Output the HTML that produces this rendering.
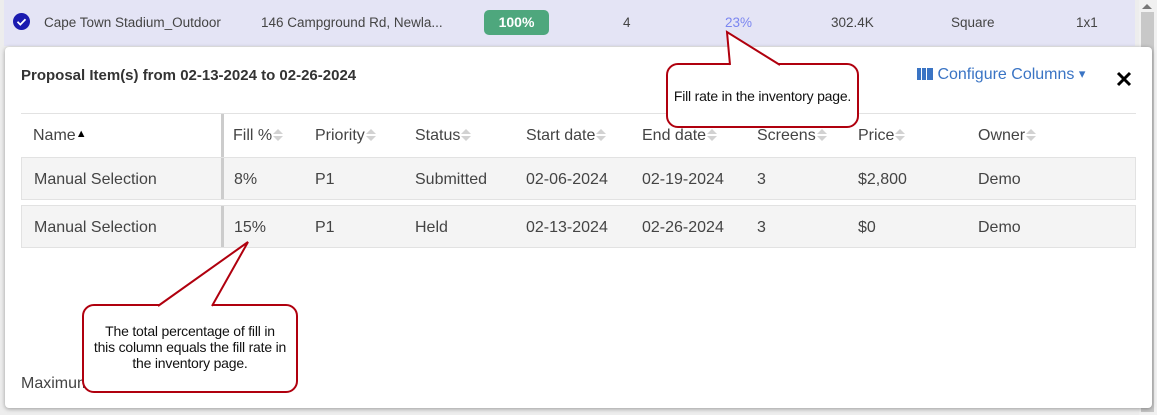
<!DOCTYPE html>
<html><head><meta charset="utf-8"><style>
*{margin:0;padding:0;box-sizing:border-box}
body{width:1157px;height:415px;overflow:hidden;background:#ededed;font-family:"Liberation Sans",Arial,sans-serif;position:relative;color:#333}
.a{position:absolute;white-space:nowrap}
.top{position:absolute;left:4px;top:0;width:1131px;height:46px;background:#e4e4f5}
.sb{position:absolute;left:1139px;top:0;width:18px;height:415px;background:#f1f1f1}
.pop{position:absolute;left:5px;top:47px;width:1147px;height:361px;background:#fff;border-radius:4px;box-shadow:0 1px 4px rgba(0,0,0,.35)}
.t14{font-size:13.5px}
.t16{font-size:16px;color:#444}
.row{position:absolute;left:21px;width:1115px;height:43px;background:#f4f4f4;border:1px solid #e2e2e2}
.sep{position:absolute;left:221px;width:3px;background:#ccc}
.ar{display:inline-block;width:9px;height:13px;vertical-align:-2px;margin-left:1px;position:relative}
.ar:before,.ar:after{content:"";position:absolute;left:0;border-left:5px solid transparent;border-right:5px solid transparent}
.ar:before{top:0;border-bottom:5px solid #d2d2d2}
.ar:after{top:7px;border-top:5px solid #d2d2d2}
.call{position:absolute;background:#fff;border:2px solid #b0000e;border-radius:12px;font-size:14px;color:#111;text-align:center;line-height:16px;letter-spacing:-0.2px}
</style></head><body>
<div class="top"></div>
<div class="sb"><div style="position:absolute;left:3px;top:4px;border-left:5px solid transparent;border-right:5px solid transparent;border-bottom:5px solid #777"></div><div style="position:absolute;left:2px;top:12px;width:13px;height:400px;background:#c8c8c8"></div></div>
<svg class="a" style="left:13px;top:13px" width="17" height="17"><circle cx="8.5" cy="8.5" r="8.5" fill="#1b1bb0"/><path d="M4.5 8.8l2.8 2.8 5.2-5.4" stroke="#fff" stroke-width="1.8" fill="none"/></svg>
<div class="a t14" style="left:44px;top:15px;color:#444">Cape Town Stadium_Outdoor</div>
<div class="a t14" style="left:261px;top:15px;color:#444">146 Campground Rd, Newla...</div>
<div class="a" style="left:484px;top:10px;width:65px;height:25px;background:#4ea77d;border-radius:5px;color:#fff;font-weight:bold;font-size:14px;text-align:center;line-height:25px">100%</div>
<div class="a t14" style="left:623px;top:15px;color:#444">4</div>
<div class="a t14" style="left:725px;top:15px;color:#7b86f0">23%</div>
<div class="a t14" style="left:831px;top:15px;color:#444">302.4K</div>
<div class="a t14" style="left:951px;top:15px;color:#444">Square</div>
<div class="a t14" style="left:1076px;top:15px;color:#444">1x1</div>

<div class="pop"></div>
<div class="a" style="left:21px;top:67px;font-size:15px;font-weight:bold;color:#333">Proposal Item(s) from 02-13-2024 to 02-26-2024</div>
<div class="a" style="left:917px;top:66px;font-size:16px;color:#3a74c4"><span style="display:inline-block;width:16px;height:12px;vertical-align:-1px;background:linear-gradient(90deg,#3a74c4 4px,#fff 4px,#fff 5px,#3a74c4 5px,#3a74c4 9px,#fff 9px,#fff 10px,#3a74c4 10px)"></span> Configure Columns <span style="font-size:13px;vertical-align:1px">▾</span></div>
<svg class="a" style="left:1116px;top:71px" width="16" height="16"><path d="M2 2L14 14M14 2L2 14" stroke="#000" stroke-width="3"/></svg>
<div class="a" style="left:21px;top:113px;width:1115px;height:1px;background:#e2e2e2"></div>
<div class="sep" style="top:114px;height:43px"></div>
<div class="a t16" style="left:33px;top:127px">Name<span style="font-size:11px;color:#000;vertical-align:3px">▲</span></div>
<div class="a t16" style="left:233px;top:127px">Fill %<span class="ar"></span></div>
<div class="a t16" style="left:315px;top:127px">Priority<span class="ar"></span></div>
<div class="a t16" style="left:415px;top:127px">Status<span class="ar"></span></div>
<div class="a t16" style="left:526px;top:127px">Start date<span class="ar"></span></div>
<div class="a t16" style="left:642px;top:127px">End date<span class="ar"></span></div>
<div class="a t16" style="left:757px;top:127px">Screens<span class="ar"></span></div>
<div class="a t16" style="left:858px;top:127px">Price<span class="ar"></span></div>
<div class="a t16" style="left:978px;top:127px">Owner<span class="ar"></span></div>

<div class="row" style="top:157px"></div>
<div class="sep" style="top:158px;height:41px"></div>
<div class="row" style="top:205px"></div>
<div class="sep" style="top:206px;height:41px"></div>
<div class="a t16" style="left:34px;top:171px">Manual Selection</div>
<div class="a t16" style="left:234px;top:171px">8%</div>
<div class="a t16" style="left:315px;top:171px">P1</div>
<div class="a t16" style="left:415px;top:171px">Submitted</div>
<div class="a t16" style="left:526px;top:171px">02-06-2024</div>
<div class="a t16" style="left:642px;top:171px">02-19-2024</div>
<div class="a t16" style="left:757px;top:171px">3</div>
<div class="a t16" style="left:858px;top:171px">$2,800</div>
<div class="a t16" style="left:978px;top:171px">Demo</div>
<div class="a t16" style="left:34px;top:219px">Manual Selection</div>
<div class="a t16" style="left:234px;top:219px">15%</div>
<div class="a t16" style="left:315px;top:219px">P1</div>
<div class="a t16" style="left:415px;top:219px">Held</div>
<div class="a t16" style="left:526px;top:219px">02-13-2024</div>
<div class="a t16" style="left:642px;top:219px">02-26-2024</div>
<div class="a t16" style="left:757px;top:219px">3</div>
<div class="a t16" style="left:858px;top:219px">$0</div>
<div class="a t16" style="left:978px;top:219px">Demo</div>
<div class="a t16" style="left:21px;top:375px">Maximum</div>

<div class="call" style="left:666px;top:63px;width:193px;height:65px;padding-top:23px">Fill rate in the inventory page.</div>
<div class="call" style="left:82px;top:304px;width:216px;height:89px;padding-top:17px">The total percentage of fill in<br>this column equals the fill rate in<br>the inventory page.</div>
<svg class="a" style="left:0;top:0" width="1157" height="415">
<path d="M730 65L727 32L780 65Z" fill="#fff"/>
<path d="M730 65L727 32L780 65" fill="none" stroke="#b0000e" stroke-width="2"/>
<path d="M158 306L248 242L212 306Z" fill="#fff"/>
<path d="M158 306L248 242L212 306" fill="none" stroke="#b0000e" stroke-width="2"/>
</svg>
</body></html>
